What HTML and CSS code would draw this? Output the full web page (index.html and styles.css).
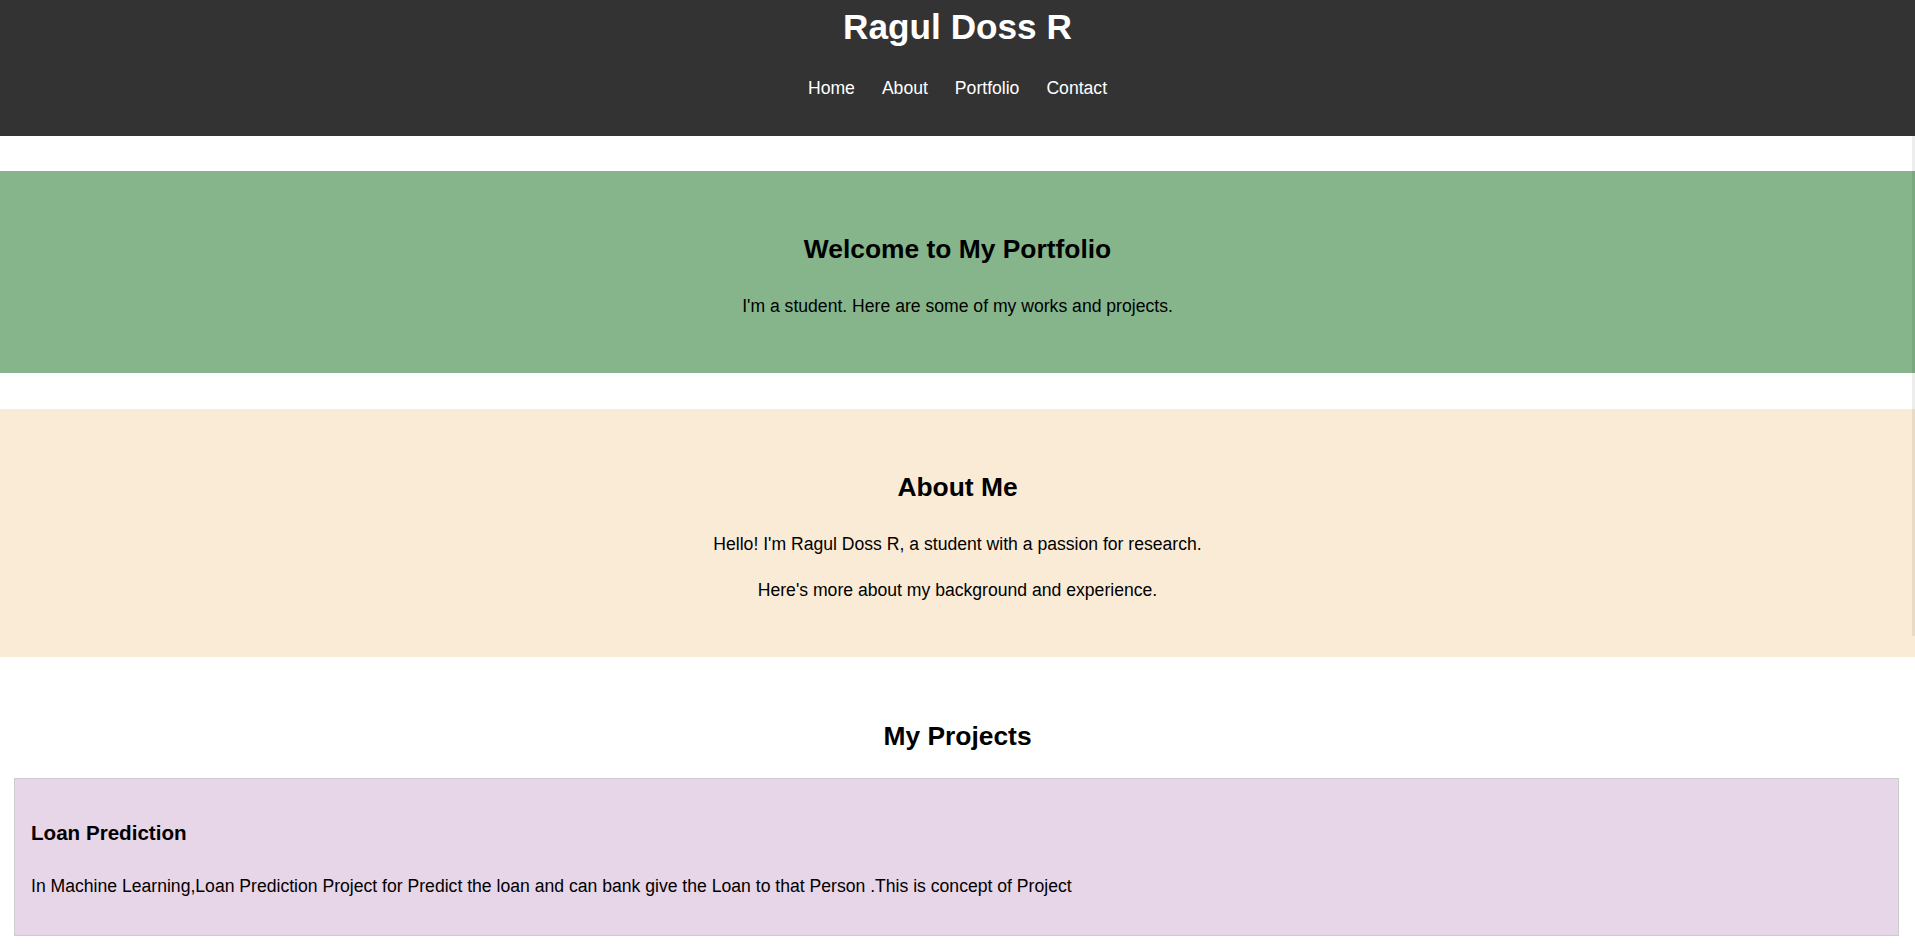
FILE: index.html
```html
<!DOCTYPE html>
<html lang="en">
<head>
<meta charset="utf-8">
<title>Ragul Doss R - Portfolio</title>
<link rel="stylesheet" href="styles.css">
</head>
<body>
<header class="site-header">
  <h1 class="site-title">Ragul Doss R</h1>
  <nav class="site-nav">
    <ul class="nav-list">
      <li><a href="#home">Home</a></li>
      <li><a href="#about">About</a></li>
      <li><a href="#portfolio">Portfolio</a></li>
      <li><a href="#contact">Contact</a></li>
    </ul>
  </nav>
</header>
<main>
  <section class="band hero" id="home">
    <h2 class="section-title">Welcome to My Portfolio</h2>
    <p class="band-text">I'm a student. Here are some of my works and projects.</p>
  </section>
  <section class="band about" id="about">
    <h2 class="section-title">About Me</h2>
    <p class="band-text">Hello! I'm Ragul Doss R, a student with a passion for research.</p>
    <p class="band-text">Here's more about my background and experience.</p>
  </section>
  <section class="projects" id="portfolio">
    <h2 class="section-title projects-title">My Projects</h2>
    <div class="project-card">
      <h3 class="project-title">Loan Prediction</h3>
      <p class="project-text">In Machine Learning,Loan Prediction Project for Predict the loan and can bank give the Loan to that Person .This is concept of Project</p>
    </div>
  </section>
</main>
<div class="scroll-thumb"></div>
</body>
</html>
```
FILE: styles.css
```css
html, body {
  margin: 0;
  padding: 0;
  background: #ffffff;
}

body {
  font-family: "Liberation Sans", Arial, sans-serif;
  color: #000000;
  overflow: hidden;
}

.site-header {
  background: #333333;
  color: #ffffff;
  text-align: center;
  padding: 7px 0 37px;
}

.site-title {
  margin: 0;
  font-size: 35.2px;
  line-height: 40px;
  font-weight: bold;
}

.site-nav {
  margin-top: 30px;
}

.nav-list {
  list-style: none;
  margin: 0;
  padding: 0;
  display: flex;
  justify-content: center;
  gap: 27px;
}

.nav-list a {
  color: #ffffff;
  text-decoration: none;
  font-size: 17.6px;
  line-height: 22px;
  display: block;
}

.band {
  text-align: center;
  padding: 64px 0 57px;
}

.hero {
  background: #86b58b;
  margin-top: 35px;
}

.about {
  background: #faebd7;
  margin-top: 36px;
}

.section-title {
  margin: 0 0 34px;
  font-size: 26.4px;
  line-height: 28px;
  font-weight: bold;
}

.band-text {
  margin: 0;
  font-size: 17.6px;
  line-height: 19px;
}

.band-text + .band-text {
  margin-top: 27px;
}

.projects {
  padding-top: 65px;
  text-align: center;
}

.projects-title {
  margin-bottom: 28px;
}

.project-card {
  text-align: left;
  margin: 0 16px 0 14px;
  border: 1px solid #cccccc;
  background: #e7d5e8;
  padding: 43px 16px 39px;
}

.project-title {
  margin: 0 0 34px;
  font-size: 20.6px;
  line-height: 21px;
  font-weight: bold;
}

.project-text {
  margin: 0;
  font-size: 17.6px;
  line-height: 19px;
}

.scroll-thumb {
  position: fixed;
  right: 0;
  top: 136px;
  width: 3px;
  height: 500px;
  background: rgba(0, 0, 0, 0.07);
}
```
